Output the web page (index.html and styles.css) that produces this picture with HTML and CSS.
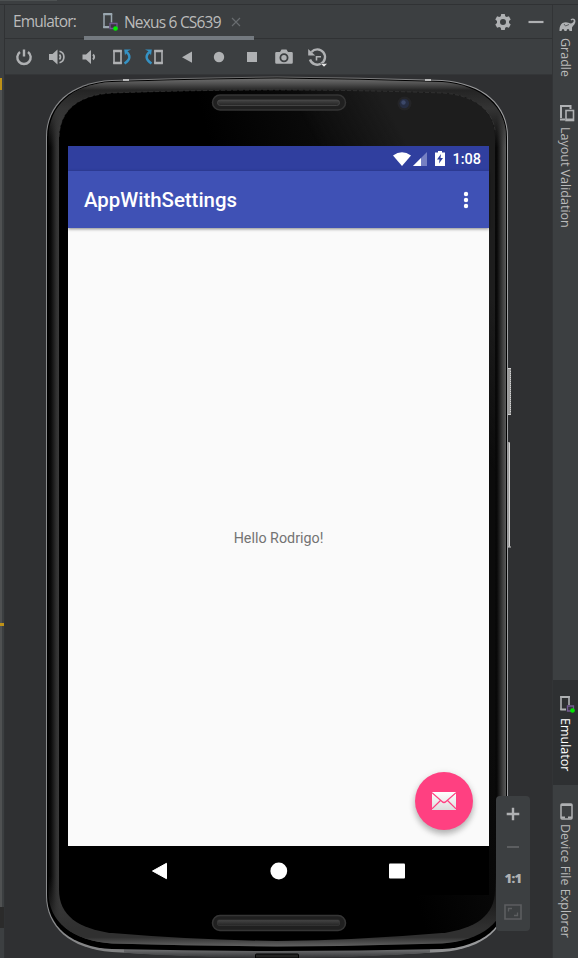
FILE: index.html
```html
<!DOCTYPE html>
<html lang="en">
<head>
<meta charset="utf-8">
<title>Emulator</title>
<link rel="stylesheet" href="styles.css">
</head>
<body>
<div class="topstrip"><span></span></div>
<div class="ide">
  <div class="gutter"><i class="mark first"></i><i class="track"></i><i class="mark"></i><i class="track low"></i><i class="end"></i></div>
  <main class="panel">
    <header class="tabs">
      <span class="title">Emulator:</span>
      <div class="tab">
        <svg width="17" height="18" viewBox="0 0 17 18"><path d="M2 1.500h7.500v8M2 1v13.500h5" fill="none" stroke="#9aa7b0" stroke-width="1.500"/><path d="M1.200 1h9M1.200 14h6" stroke="#9aa7b0" stroke-width="2.200"/><path d="M8 10.500h7v5H8z" fill="#38343f" stroke="#735a91" stroke-width="1.300"/><circle cx="13.500" cy="15.500" r="2.300" fill="#00f000"/></svg>
        <span class="tabname">Nexus 6 CS639</span>
        <svg class="close" width="10" height="10" viewBox="0 0 10 10"><path d="M1 1l8 8M9 1l-8 8" stroke="#696d70" stroke-width="1.100"/></svg>
      </div>
      <div class="actions">
        <svg width="18" height="18" viewBox="0 0 18 18"><path fill="#afb1b3" fill-rule="evenodd" d="M7.200 1h3.600l.4 2.200 1.500.9 2.200-.8 1.800 3.100L15 8v2l1.700 1.600-1.800 3.100-2.200-.8-1.500.9-.4 2.200H7.200l-.4-2.200-1.500-.9-2.200.8-1.800-3.100L3 10V8L1.300 6.400l1.800-3.100 2.200.8 1.500-.9zM9 6a3 3 0 100 6 3 3 0 000-6z"/></svg>
        <svg width="16" height="18" viewBox="0 0 16 18"><path d="M.5 9h15" stroke="#afb1b3" stroke-width="2.200"/></svg>
      </div>
    </header>
    <div class="toolbar">
      <svg viewBox="0 0 20 20"><path d="M6 5A6.700 6.700 0 1 0 14 5M10 2.500v7" fill="none" stroke="#afb1b3" stroke-width="2.400"/></svg>
      <svg viewBox="0 0 20 20"><path d="M2 7h3.500l5-4.500v15l-5-4.500H2z" fill="#afb1b3"/><path d="M12.500 7.500q2 2.500 0 5M12.500 4.300a5.900 5.900 0 0 1 0 11.400" fill="none" stroke="#afb1b3" stroke-width="1.700"/></svg>
      <svg viewBox="0 0 20 20"><path d="M3.500 7.500H7L12 3v14l-5-4.500H3.500z" fill="#afb1b3"/><path d="M14 7.500q2.500 2.500 0 5" fill="none" stroke="#afb1b3" stroke-width="1.800"/></svg>
      <svg viewBox="0 0 20 20"><path d="M2 4h7v12H2z" fill="none" stroke="#afb1b3" stroke-width="1.600"/><path d="M1.200 4h8.600M1.200 16h8.600" stroke="#afb1b3" stroke-width="2.400"/><path d="M14 4.500q7.500 6-1.500 12" fill="none" stroke="#3592c4" stroke-width="2.400"/><path d="M12.200 2.500H19l-4 2-2 4z" fill="#3592c4"/></svg>
      <svg viewBox="0 0 20 20"><path d="M11 4h7v12h-7z" fill="none" stroke="#afb1b3" stroke-width="1.600"/><path d="M10.200 4h8.600M10.200 16h8.600" stroke="#afb1b3" stroke-width="2.400"/><path d="M6 4.500q-7.500 6 1.500 12" fill="none" stroke="#3592c4" stroke-width="2.400"/><path d="M7.800 2.500H1l4 2 2 4z" fill="#3592c4"/></svg>
      <svg viewBox="0 0 20 20"><path d="M15 4.500v11.300L5 10.200z" fill="#afb1b3"/></svg>
      <svg viewBox="0 0 20 20"><circle cx="10" cy="10" r="5.200" fill="#afb1b3"/></svg>
      <svg viewBox="0 0 20 20"><path d="M5 5h10v10H5z" fill="#afb1b3"/></svg>
      <svg viewBox="0 0 20 20"><path fill="#afb1b3" fill-rule="evenodd" d="M2.500 5H6l1.500-2.500h5L14 5h3.500q1.300 0 1.300 1.300v9.200q0 1.300-1.300 1.300h-15q-1.300 0-1.300-1.300V6.300Q1.200 5 2.500 5zM10 6.300a4.500 4.500 0 100 9 4.500 4.500 0 000-9z"/><circle cx="10" cy="10.800" r="2.700" fill="#afb1b3"/></svg>
      <svg viewBox="0 0 20 20"><path d="M4.500 5A7.700 7.700 0 1 1 3 12.500" fill="none" stroke="#afb1b3" stroke-width="2.400"/><path d="M1.200 2v6.500h7z" fill="#afb1b3"/><path d="M9.500 13.500V9.700h4.500" fill="none" stroke="#afb1b3" stroke-width="1.600"/><path d="M13.500 16.500h7L17 20z" fill="#e2e2e2" stroke="#3c3f41" stroke-width=".5"/></svg>
    </div>
    <section class="stage">
      <svg class="device" width="547" height="883" viewBox="5 75 547 883">
        <defs>
          <linearGradient id="edge" x1="46" x2="509" y1="0" y2="0" gradientUnits="userSpaceOnUse"><stop offset="0" stop-color="#8b8c8e"/><stop offset=".5" stop-color="#666"/><stop offset="1" stop-color="#a0a1a3"/></linearGradient>
          <linearGradient id="chin" x1="0" x2="0" y1="950" y2="958" gradientUnits="userSpaceOnUse"><stop offset="0" stop-color="#6b6c6e"/><stop offset="1" stop-color="#303133"/></linearGradient>
          <linearGradient id="rim" x1="48" x2="507" y1="0" y2="0" gradientUnits="userSpaceOnUse"><stop offset="0" stop-color="#030303"/><stop offset=".006" stop-color="#080808"/><stop offset=".018" stop-color="#303030"/><stop offset=".025" stop-color="#3c3c3c"/><stop offset=".978" stop-color="#080808"/><stop offset=".99" stop-color="#3c3c3c"/><stop offset="1" stop-color="#636363"/></linearGradient>
          <linearGradient id="cap" x1="0" x2="0" y1="78" y2="946" gradientUnits="userSpaceOnUse"><stop offset="0" stop-color="#707070"/><stop offset=".006" stop-color="#535353"/><stop offset=".014" stop-color="#242424"/><stop offset=".035" stop-color="#343434"/><stop offset=".08" stop-color="#333" stop-opacity="0"/><stop offset=".92" stop-color="#333" stop-opacity="0"/><stop offset=".98" stop-color="#303030"/><stop offset=".99" stop-color="#303030"/><stop offset="1" stop-color="#606060"/></linearGradient>
          <linearGradient id="glass" x1="59" y1="800" x2="498" y2="680" gradientUnits="userSpaceOnUse"><stop offset="0" stop-color="#000"/><stop offset=".7" stop-color="#000"/><stop offset=".95" stop-color="#0b0b0b"/><stop offset="1" stop-color="#0b0b0b"/></linearGradient>
          <linearGradient id="shine" x1="320" y1="150" x2="390" y2="112" gradientUnits="userSpaceOnUse"><stop offset="0" stop-color="#1d1d1d" stop-opacity="0"/><stop offset="1" stop-color="#1d1d1d"/></linearGradient>
          <linearGradient id="fade" x1="0" y1="90" x2="0" y2="895" gradientUnits="userSpaceOnUse"><stop offset="0" stop-color="#fff"/><stop offset=".45" stop-color="#fff"/><stop offset=".8" stop-color="#000"/></linearGradient>
          <mask id="lower"><path d="M0 75h560v883H0z" fill="url(#fade)"/></mask>
          <linearGradient id="slot" x1="0" y1="0" x2="0" y2="1"><stop offset="0" stop-color="#444"/><stop offset="1" stop-color="#252525"/></linearGradient>
        </defs>
        <path fill="#999" d="M508 369h3v46h-3zM508 442h2v105h-2z"/>
        <path stroke="#d3d3d3" stroke-dasharray="1 1" d="M510.500 371v42"/>
        <path stroke="#d0d0d0" d="M509.500 443v103M508 368.500h3M508 414.500h3M508 547h3"/>
        <path fill="url(#edge)" d="M46 137C46 105 70 82 112 80Q195 77 277 76.500Q360 77 442 80C484 83 508 105 508 137V895C508 927 484 949 442 952Q360 957 277 957.500Q195 957 112 952C70 949 46 927 46 895Z"/>
        <path fill="url(#chin)" d="M124 948H430V952.700Q360 957.500 277 958Q195 957.500 124 952.700Z"/>
        <path fill="#000" d="M47 137C47 106 71 83 112 81Q195 78 277 77.500Q360 78 442 81C483 84 507 106 507 137V895C507 926 483 947 442 949Q360 951 277 951Q195 951 112 949C71 947 47 926 47 895Z"/>
        <path fill="url(#rim)" d="M48.500 137C48.500 107 72 84 112 82Q195 79 277 78.500Q360 79 442 82C482 85 506 107 506 137V893C506 921 482 941 442 943.500Q360 946 277 946.500Q195 946 112 943.500C72 941 48.500 921 48.500 893Z"/>
        <path fill="url(#cap)" d="M48.500 137C48.500 107 72 84 112 82Q195 79 277 78.500Q360 79 442 82C482 85 506 107 506 137V893C506 921 482 941 442 943.500Q360 946 277 946.500Q195 946 112 943.500C72 941 48.500 921 48.500 893Z"/>
        <path fill="url(#glass)" d="M59 137C60 110 78 95 112 93Q195 90 277 90Q360 90 442 93C477 95 495 113 495 137V890C495 915 476 929 442 933Q360 940 277 941Q195 940 112 933C78 929 59 915 59 890Z"/>
        <path mask="url(#lower)" fill="url(#shine)" d="M300 90Q370 90 442 93C477 95 495 113 495 137V890H300z"/>
        <path fill="none" stroke="#3c3c3c" stroke-width=".6" stroke-dasharray="4 2" d="M59 137C60 110 78 95 112 93Q195 90 277 90Q360 90 442 93C477 95 493 113 495 130"/>
        <g><rect x="212.500" y="95" width="133" height="15" rx="7.500" fill="#202020" stroke="#353535" stroke-width="1.500"/><rect x="217.500" y="100" width="122" height="5.500" rx="2.700" fill="url(#slot)" stroke="#4b4b4b" stroke-width=".8"/>
        <rect x="212.500" y="915.500" width="133" height="15" rx="7.500" fill="#202020" stroke="#353535" stroke-width="1.500"/><rect x="217.500" y="920" width="122" height="5.500" rx="1.500" fill="url(#slot)" stroke="#3d3d3d" stroke-width=".6"/></g>
        <circle cx="404.500" cy="103.500" r="7" fill="#242426"/><circle cx="404.300" cy="103.500" r="4.800" fill="#262d42"/><circle cx="403.500" cy="102.500" r="2.200" fill="#3c4869"/>
        <path d="M255.500 958v-3q0-1 1-1h41q1 0 1 1v3z" fill="#222" stroke="#000"/>
        <path d="M123 80h6M425 80h6" stroke="#ddd" stroke-width="1.300"/>
      </svg>
      <div class="screen">
        <div class="status">
          <svg width="18" height="14" viewBox="0 0 18 14"><path d="M0 3.500Q9-3 18 3.500L9 14z" fill="#fff"/></svg>
          <svg class="signal" width="14" height="14" viewBox="0 0 14 14"><path d="M14 0v14H0z" fill="#7680c3"/><path d="M8 6v8H0z" fill="#fff"/></svg>
          <svg class="battery" width="10" height="15" viewBox="0 0 10 15"><path d="M3 0h4v1.500h3V15H0V1.500h3z" fill="#fff"/><path d="M6 3L2 8.500h2.500L4 12.500 8 7H5.500z" fill="#303f9f"/></svg>
          <span>1:08</span>
        </div>
        <div class="appbar"><h1>AppWithSettings</h1><svg width="6" height="18" viewBox="0 0 6 18"><g fill="#fff"><circle cx="3" cy="3" r="2.200"/><circle cx="3" cy="9" r="2.200"/><circle cx="3" cy="15" r="2.200"/></g></svg></div>
        <div class="content"><p>Hello Rodrigo!</p>
          <div class="fab"><svg width="24" height="18" viewBox="0 0 24 18"><defs><linearGradient id="mail" x1="0" y1="0" x2="0" y2="1"><stop offset="0" stop-color="#fff"/><stop offset="1" stop-color="#ddd"/></linearGradient></defs><path d="M0 0h24v18H0z" fill="url(#mail)"/><path d="M0 .8L10 9.500Q12 11.500 14 9.500L24 .8M0 16.800L8.500 8.500M24 16.800L15.500 8.500" fill="none" stroke="#ff4081" stroke-width="1.200"/></svg></div>
        </div>
        <div class="nav">
          <svg width="18" height="18" viewBox="0 0 18 18"><path d="M15.500 1.300v15.400L1.500 9z" fill="#fff" stroke="#fff" stroke-linejoin="round"/></svg>
          <svg width="18" height="18" viewBox="0 0 18 18"><circle cx="8.800" cy="9" r="8.400" fill="#fff"/></svg>
          <svg width="18" height="18" viewBox="0 0 18 18"><rect x="1" y="1.500" width="16" height="15" rx="1" fill="#fff"/></svg>
        </div>
      </div>
      <div class="zoom">
        <svg width="14" height="14" viewBox="0 0 14 14"><path d="M7 .7v12.600M.7 7h12.600" stroke="#afb1b3" stroke-width="2.400"/></svg>
        <svg width="14" height="14" viewBox="0 0 14 14"><path d="M1 8h12" stroke="#5c5e60" stroke-width="2"/></svg>
        <span>1:1</span>
        <svg width="18" height="16" viewBox="0 0 18 16"><path d="M1 1h16v14H1z" fill="none" stroke="#5c5e60" stroke-width="1.600"/><path d="M4.500 7.500v-3h3.500M13.500 8.500v3H10" fill="none" stroke="#5c5e60" stroke-width="1.300"/></svg>
      </div>
    </section>
  </main>
  <aside class="sidebar">
    <div class="side gradle"><svg width="17" height="14" viewBox="0 0 17 14"><path d="M.5 13Q.2 7.500 3.500 5q3-1.500 6-.3Q12 6 13.500 4.800q1.700-1.500 1-2.600-.8-.8-2 .3l-1-1Q13.500-.2 15.500.9q2 2-.2 5.500-1.500 1.500-2.300 3V13h-2.500q-.2-2-1.500-2t-1.500 2H5.500q-.3-2-1.500-2t-1.500 2z" fill="#afb1b3"/><path d="M5 6l1.500 2L10 6.500" fill="none" stroke="#5b5e60"/></svg><span>Gradle</span></div>
    <div class="side layout"><svg width="16" height="18" viewBox="0 0 16 18"><path d="M2 1v13M1 15.500h5M1 2h11M11.500 1v4" fill="none" stroke="#afb1b3" stroke-width="2"/><rect x="7" y="6.500" width="7.500" height="10" fill="#3c3f41" stroke="#afb1b3" stroke-width="1.600"/><path d="M7 15.500h8" stroke="#afb1b3" stroke-width="2"/></svg><span>Layout Validation</span></div>
    <div class="side emulator"><svg width="17" height="18" viewBox="0 0 17 18"><path d="M2 1v14M10 1v9" stroke="#afb1b3" stroke-width="1.600"/><path d="M1.300 2h9.400M1.300 14.500H7" stroke="#afb1b3" stroke-width="2.200"/><path d="M8.500 11h6v5h-6z" fill="#38343f" stroke="#735a91" stroke-width="1.300"/><circle cx="13.500" cy="15.500" r="2.300" fill="#00e600"/></svg><span>Emulator</span></div>
    <div class="side explorer"><svg width="13" height="17" viewBox="0 0 13 17"><rect x="1" y="1" width="11" height="15" rx="1" fill="none" stroke="#afb1b3" stroke-width="1.500"/><path d="M1 2h11M1 14.500h4M8 14.500h4" stroke="#afb1b3" stroke-width="2.200"/></svg><span>Device File Explorer</span></div>
  </aside>
</div>
</body>
</html>
```
FILE: styles.css
```css
* { box-sizing: border-box; }
body { margin: 0; width: 578px; height: 958px; overflow: hidden; background: #3c3f41; color: #bbb; font-family: "Open Sans", sans-serif; display: flex; flex-direction: column; }
svg { display: block; flex: none; }
.topstrip { height: 5px; flex: none; border-bottom: 1px solid #303234; }
.topstrip span { display: block; width: 57px; height: 1px; background: #4d5152; }
.ide { flex: 1; display: flex; min-height: 0; }
.gutter { width: 5px; border-right: 1px solid #303234; display: flex; flex-direction: column; padding-top: 73px; }
.mark { width: 4px; height: 3px; background: #be9117; }
.mark.first { width: 2px; height: 12px; }
.track { width: 2px; height: 533px; background: #4f5152; }
.low { height: 281px; }
.end { height: 21px; background: #2b2b2b; }
.panel { width: 547px; display: flex; flex-direction: column; }
.tabs { height: 34px; display: flex; align-items: center; border-bottom: 1px solid #303234; font-size: 15.5px; padding-left: 8px; }
.title { width: 71px; letter-spacing: -.8px; white-space: nowrap; margin-top: -1px; }
.tab { width: 170px; height: 34px; border-bottom: 4px solid #747a80; display: flex; align-items: center; padding: 2px 12px 0 18px; position: relative; top: 1px; }
.tabname { margin-left: 5px; width: 99px; letter-spacing: -.8px; white-space: nowrap; }
.close { margin-left: 8px; }
.actions { margin-left: auto; display: flex; gap: 16px; padding-right: 8px; }
.toolbar { height: 36px; flex: none; padding: 0 0 0 9px; display: flex; align-items: center; gap: 12.5px; border-bottom: 1px solid #343638; }
.toolbar svg { width: 20px; height: 20px; }
.stage { flex: 1; background: #2f3032; position: relative; padding: 71px 0 0 63px; }
.device { position: absolute; left: 0; top: 0; }
.screen { position: relative; width: 421px; height: 749px; font-family: Roboto, sans-serif; display: flex; flex-direction: column; }
.status { height: 25px; background: #303f9f; display: flex; align-items: center; justify-content: flex-end; padding-right: 8px; color: #fff; font-size: 14.5px; font-weight: 500; }
.status span { margin-top: 1px; }
.signal { margin-left: 2px; }
.battery { margin: 0 7px 0 8px; }
.appbar { height: 57px; background: #3f51b5; color: #fff; display: flex; align-items: center; justify-content: space-between; padding: 0 20px 0 16px; box-shadow: 0 1px 3px #0007; z-index: 1; }
.appbar h1 { font-size: 20.4px; font-weight: 500; margin: 1px 0 0; }
.content { height: 618px; background: #fafafa; color: #737373; font-size: 14.3px; display: flex; align-items: center; justify-content: center; position: relative; }
.content p { margin: 1px 0 0; }
.fab { position: absolute; right: 16px; bottom: 16px; width: 58px; height: 58px; border-radius: 50%; background: #ff4081; display: flex; align-items: center; justify-content: center; box-shadow: 0 4px 6px #0004, 0 1px 8px #0001; }
.nav { height: 49px; background: #000; display: flex; align-items: center; justify-content: space-between; padding: 0 83px; }
.zoom { position: absolute; left: 491px; top: 721px; width: 34px; height: 135px; border-radius: 4px; background: #3c3f41; display: flex; flex-direction: column; align-items: center; padding-top: 11px; gap: 18px; }
.zoom span { font: 800 13px/18px "Open Sans", sans-serif; color: #afb1b3; letter-spacing: -.6px; margin-top: -2px; }
.zoom span + svg { margin-top: -1px; }
.sidebar { width: 26px; border-left: 1px solid #323436; display: flex; flex-direction: column; font-size: 12.5px; }
.side { display: flex; flex-direction: column; align-items: center; padding-left: 1px; }
.side span { writing-mode: vertical-rl; white-space: nowrap; line-height: 16px; margin-right: 3px; }
.side svg { margin-left: 2px; }
.gradle { height: 90px; padding-top: 13px; }
.gradle span { margin-top: 6px; }
.layout { height: 585px; padding-top: 9px; }
.layout span { margin-top: 5px; }
.emulator { height: 105px; padding-top: 15px; background: #2e3032; color: #fff; }
.emulator span { margin-top: 5px; }
.explorer { flex: 1; padding-top: 18px; }
.explorer svg { margin-left: 0; }
.explorer span { margin-top: 4px; }
```
